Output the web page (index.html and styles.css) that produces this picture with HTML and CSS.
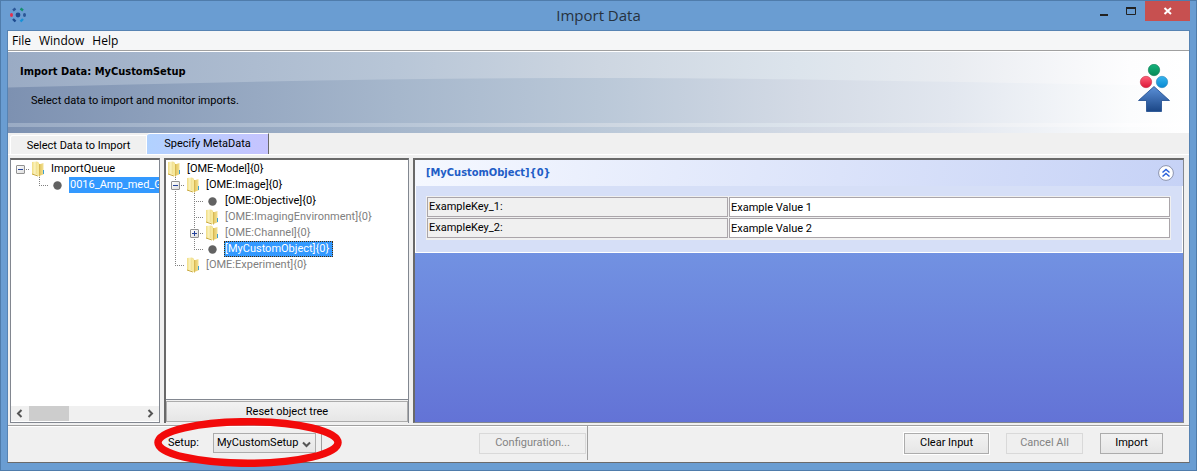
FILE: index.html
```
<!DOCTYPE html>
<html lang="en">
<head>
<meta charset="utf-8">
<title>Import Data</title>
<link rel="stylesheet" href="styles.css">
</head>
<body>
<svg class="defs" width="0" height="0" aria-hidden="true">
  <defs>
    <linearGradient id="fold"><stop offset="0" stop-color="#f0dc84"/><stop offset=".4" stop-color="#fbf3bd"/><stop offset="1" stop-color="#e3c75f"/></linearGradient>
    <linearGradient id="leaf"><stop offset="0" stop-color="#e0c25a"/><stop offset="1" stop-color="#f3e193"/></linearGradient>
    <symbol id="folder" viewBox="0 0 14 16">
      <path d="M1 1L6 0.500L8 2V14L1 13z" fill="url(#fold)"/>
      <path d="M1 13L7 15" stroke="#c9a93c" stroke-width="1"/>
      <path d="M8 3.500L12.500 2V13.500L8 15z" fill="url(#leaf)"/>
      <path d="M6 1L8.500 3V15.500L6 14z" fill="#f7e99c"/>
      <path d="M8.500 3V15.500" stroke="#d0b048" stroke-width=".8"/>
      <path d="M12 9h1v4h-1z" fill="#3d9fd0"/>
    </symbol>
    <symbol id="dot" viewBox="0 0 9 9"><circle cx="4.500" cy="4.500" r="4.200" fill="#626262"/></symbol>
  </defs>
</svg>
<div class="window">
  <header class="titlebar">
    <svg class="app-icon" viewBox="0 0 16 16" aria-hidden="true">
      <circle cx="8" cy="8" r="2.400" fill="#1d4a8f"/>
      <ellipse cx="1.500" cy="8" rx="1.500" ry="2" fill="#e5304d"/>
      <ellipse cx="14.500" cy="8" rx="1.500" ry="2" fill="#2b5797"/>
      <path d="M3 3.500L5.500 1.500" stroke="#2b5797" stroke-width="2.400"/>
      <path d="M10.500 1.500L13 3.500" stroke="#158f70" stroke-width="2.400"/>
      <path d="M3 12L5.500 14.500" stroke="#1d4a8f" stroke-width="2.400"/>
      <path d="M10.500 14.500L13 12" stroke="#1691d8" stroke-width="2.400"/>
    </svg>
    <h1 class="title">Import Data</h1>
    <div class="controls">
      <button class="control" aria-label="Minimize"><svg width="11" height="11" viewBox="0 0 11 11"><path d="M1 8h8v2H1z" fill="#222"/></svg></button>
      <button class="control" aria-label="Maximize"><svg width="11" height="11" viewBox="0 0 11 11"><path d="M.5 2v6.500h9V2" fill="none" stroke="#222"/><path d="M0 1h10v2H0z" fill="#222"/></svg></button>
      <button class="control close" aria-label="Close"><svg width="10" height="10" viewBox="0 0 10 10"><path d="M1.500 2l6.500 6M8 2L1.500 8" stroke="#fff" stroke-width="2"/></svg></button>
    </div>
  </header>
  <div class="client">
    <nav class="menubar">
      <button>File</button><button>Window</button><button>Help</button>
    </nav>
    <section class="banner">
      <svg class="banner-art" viewBox="0 0 1181 81" preserveAspectRatio="none" aria-hidden="true">
        <defs>
          <linearGradient id="top"><stop offset="0" stop-color="#9aabc4"/><stop offset=".33" stop-color="#b8c6d7"/><stop offset=".5" stop-color="#cdd6e1"/><stop offset=".67" stop-color="#dce4ec"/><stop offset=".8" stop-color="#e9ecf1"/><stop offset=".95" stop-color="#fdfdfe"/><stop offset="1" stop-color="#fff"/></linearGradient>
          <linearGradient id="low"><stop offset="0" stop-color="#7d91b1"/><stop offset=".33" stop-color="#a6b7cc"/><stop offset=".5" stop-color="#bac8d8"/><stop offset=".67" stop-color="#d3dae5"/><stop offset=".8" stop-color="#e2e7ef"/><stop offset=".95" stop-color="#fbfcfd"/><stop offset="1" stop-color="#fff"/></linearGradient>
        </defs>
        <rect width="1181" height="81" fill="url(#top)"/>
        <path d="M0 35.500C200 30 400 26 600 26C750 26 900 29 1181 34V71H0zM0 75H1181V81H0z" fill="url(#low)"/>
      </svg>
      <div class="banner-text">
        <h2>Import Data: MyCustomSetup</h2>
        <p>Select data to import and monitor imports.</p>
      </div>
      <svg class="banner-logo" width="32" height="49" viewBox="0 0 32 49" aria-hidden="true">
        <defs>
          <linearGradient id="g" x2="0" y2="1"><stop stop-color="#14b27c"/><stop offset="1" stop-color="#078a58"/></linearGradient>
          <linearGradient id="r" x2="0" y2="1"><stop stop-color="#ff6078"/><stop offset="1" stop-color="#dc1837"/></linearGradient>
          <linearGradient id="b" x2="0" y2="1"><stop stop-color="#35b4ee"/><stop offset="1" stop-color="#0889d2"/></linearGradient>
          <linearGradient id="a" x2="0" y2="1"><stop stop-color="#5b90d8"/><stop offset="1" stop-color="#1b4686"/></linearGradient>
        </defs>
        <circle cx="16" cy="6" r="5.700" fill="url(#g)" stroke="#067b51" stroke-width=".6"/>
        <circle cx="8" cy="18" r="5.700" fill="url(#r)" stroke="#c52b42" stroke-width=".6"/>
        <circle cx="24" cy="18" r="5.700" fill="url(#b)" stroke="#2783b8" stroke-width=".6"/>
        <path d="M16 22.500L31.500 36.500H23.500V47.500H8.500V36.500H.5z" fill="url(#a)" stroke="#1c4a8e" stroke-width=".8"/>
      </svg>
    </section>
    <div class="tabs" role="tablist">
      <button class="tab" role="tab">Select Data to Import</button>
      <button class="tab selected" role="tab" aria-selected="true">Specify MetaData</button>
    </div>
    <main class="panes">
      <section class="pane queue">
        <ul class="tree">
          <li class="row"><span class="guide"><button class="toggle" aria-label="Collapse"><svg width="7" height="7" viewBox="0 0 7 7"><path d="M1 3.500h5" stroke="#24429a"/></svg></button></span><svg class="folder"><use href="#folder"/></svg><span class="name">ImportQueue</span></li>
          <li class="row"><span class="guide blank"></span><span class="guide end"></span><svg class="dot"><use href="#dot"/></svg><span class="name chosen">0016_Amp_med_G</span></li>
        </ul>
        <div class="scrollbar">
          <svg width="7" height="9" viewBox="0 0 7 9"><path d="M5.500 1L2 4.500L5.500 8" fill="none" stroke="#555" stroke-width="2"/></svg>
          <span class="thumb"></span>
          <svg width="7" height="9" viewBox="0 0 7 9"><path d="M1.500 1L5 4.500L1.500 8" fill="none" stroke="#555" stroke-width="2"/></svg>
        </div>
      </section>
      <section class="pane objects">
        <ul class="tree">
          <li class="row"><svg class="folder"><use href="#folder"/></svg><span class="name">[OME-Model]{0}</span></li>
          <li class="row"><span class="guide through"><button class="toggle" aria-label="Collapse"><svg width="7" height="7" viewBox="0 0 7 7"><path d="M1 3.500h5" stroke="#24429a"/></svg></button></span><svg class="folder"><use href="#folder"/></svg><span class="name">[OME:Image]{0}</span></li>
          <li class="row"><span class="guide line"></span><span class="guide through"></span><svg class="dot"><use href="#dot"/></svg><span class="name">[OME:Objective]{0}</span></li>
          <li class="row"><span class="guide line"></span><span class="guide through"></span><svg class="folder"><use href="#folder"/></svg><span class="name muted">[OME:ImagingEnvironment]{0}</span></li>
          <li class="row"><span class="guide line"></span><span class="guide through"><button class="toggle" aria-label="Expand"><svg width="7" height="7" viewBox="0 0 7 7"><path d="M1 3.500h5M3.500 1v5" stroke="#24429a"/></svg></button></span><svg class="folder"><use href="#folder"/></svg><span class="name muted">[OME:Channel]{0}</span></li>
          <li class="row"><span class="guide line"></span><span class="guide end"></span><svg class="dot"><use href="#dot"/></svg><span class="name chosen focused">[MyCustomObject]{0}</span></li>
          <li class="row"><span class="guide end"></span><svg class="folder"><use href="#folder"/></svg><span class="name muted">[OME:Experiment]{0}</span></li>
        </ul>
        <button class="button reset">Reset object tree</button>
      </section>
      <section class="pane details">
        <header class="details-head">
          <h3>[MyCustomObject]{0}</h3>
          <button class="collapse" aria-label="Collapse section"><svg width="16" height="16" viewBox="0 0 16 16"><circle cx="8" cy="8" r="7.400" fill="#fff" stroke="#8b93ae"/><path d="M4.500 7.500L8 4.500L11.500 7.500M4.500 11.500L8 8.500L11.500 11.500" fill="none" stroke="#2b62d9" stroke-width="1.500"/></svg></button>
        </header>
        <div class="details-body">
          <table>
            <tr><th><label for="key1">ExampleKey_1:</label></th><td><input id="key1" type="text" value="Example Value 1"></td></tr>
            <tr><th><label for="key2">ExampleKey_2:</label></th><td><input id="key2" type="text" value="Example Value 2"></td></tr>
          </table>
        </div>
      </section>
    </main>
    <footer class="actions">
      <div class="setup">
        <label for="setup">Setup:</label>
        <span class="combo">
          <select id="setup"><option>MyCustomSetup</option></select>
          <svg class="chevron" width="9" height="7" viewBox="0 0 9 7"><path d="M1 1.500L4.500 5L8 1.500" fill="none" stroke="#555" stroke-width="2"/></svg>
        </span>
        <span class="rule"></span>
        <button class="button config" disabled>Configuration...</button>
        <svg class="highlight" viewBox="0 0 188 49" aria-hidden="true"><ellipse cx="94" cy="24.500" rx="90" ry="20.800" fill="none" stroke="#f20a0a" stroke-width="7.500"/></svg>
      </div>
      <div class="run">
        <button class="button clear">Clear Input</button>
        <button class="button cancel" disabled>Cancel All</button>
        <button class="button import">Import</button>
      </div>
    </footer>
  </div>
</div>
</body>
</html>
```
FILE: styles.css
```
* { box-sizing: border-box; }
body { margin: 0; font: 11px/16px Roboto, "Liberation Sans", sans-serif; color: #000; }
h1, h2, h3, p, ul { margin: 0; padding: 0; }
button, input, select { font: inherit; color: inherit; margin: 0; }
svg { flex: none; display: block; }
.defs { position: absolute; }

.window { display: flex; flex-direction: column; min-height: 100vh; padding: 0 6px 7px; background: #6a9dd2; border: 1px solid #4f7cab; }
.titlebar { display: grid; grid-template-columns: 1fr auto 1fr; height: 29px; }
.app-icon { width: 16px; height: 16px; margin: 6px 0 0 3px; }
.title { font: 15px/29px "Open Sans", "Noto Sans", sans-serif; color: #26323f; }
.controls { display: flex; justify-content: flex-end; align-items: flex-start; }
.control { display: grid; place-items: center; width: 27px; height: 20px; padding: 0; border: 0; background: none; }
.control.close { width: 45px; background: #c75050; }

.client { flex: 1; display: flex; flex-direction: column; background: #f0f0f0; border: 1px solid #5683b3; border-bottom-color: #6b6b6b; }
.menubar { display: flex; height: 20px; padding-left: 4px; background: #f5f6f7; border-bottom: 1px solid #a0a0a0; font: 12px/19px "Open Sans", "Noto Sans", sans-serif; }
.menubar button { border: 0; padding: 0; margin-right: 8px; background: none; }

.banner { display: flex; justify-content: space-between; position: relative; height: 82px; border-top: 1px solid #fff; }
.banner-art { position: absolute; inset: 0; width: 100%; height: 100%; }
.banner-text { position: relative; padding: 12px 0 0 12px; }
.banner h2 { font: bold 11px/16px "DejaVu Sans Condensed", "DejaVu Sans", sans-serif; }
.banner p { padding: 13px 0 0 11px; }
.banner-logo { position: relative; margin: 12px 19px 0 0; }

.tabs { display: flex; align-items: flex-end; height: 22px; padding-left: 2px; border-bottom: 1px solid #fff; }
.tab { width: 137px; height: 19px; padding: 2px 0 0; border: 1px solid #fff; border-bottom: 0; border-radius: 3px 0 0 0; background: #f0f0f0; }
.tab.selected { width: 122px; height: 21px; padding: 0 0 1px; border-width: 1px 1px 0 0; border-right-color: #696969; background: linear-gradient(100deg, #b1d2ff, #c6c3ff); }

.panes { flex: 1; display: flex; gap: 4px; padding: 3px 5px 2px 2px; }
.pane { display: flex; flex-direction: column; background: #fff; border: 1px solid #828790; border-top: 2px solid #696969; min-width: 0; }
.queue { width: 150px; }
.objects { width: 245px; background: #f0f0f0; border-left: 2px solid #696969; border-bottom: 0; }
.details { flex: 1; background: linear-gradient(#7292e2 90px, #6373d6); border-left-width: 2px; border-left-color: #696969; }

.tree { flex: 1; list-style: none; background: #fff; overflow: hidden; }
.queue .tree, .objects .tree { padding-top: 1px; }
.objects .tree { border-bottom: 1px solid #828790; }
.row { display: flex; height: 16px; white-space: nowrap; }
.guide { flex: none; display: grid; width: 19px; padding: 4px 0 0 5px; background: repeating-linear-gradient(90deg, #808080 0 1px, transparent 1px 2px) 9px 8px / 10px 1px no-repeat; }
.guide.line { background: repeating-linear-gradient(#808080 0 1px, transparent 1px 2px) 9px 0 / 1px 16px no-repeat; }
.guide.through { background: repeating-linear-gradient(90deg, #808080 0 1px, transparent 1px 2px) 9px 8px / 10px 1px no-repeat, repeating-linear-gradient(#808080 0 1px, transparent 1px 2px) 9px 0 / 1px 16px no-repeat; }
.guide.end { background: repeating-linear-gradient(90deg, #808080 0 1px, transparent 1px 2px) 9px 8px / 10px 1px no-repeat, repeating-linear-gradient(#808080 0 1px, transparent 1px 2px) 9px 0 / 1px 9px no-repeat; }
.guide.blank { background: none; }
.toggle { width: 9px; height: 9px; padding: 0; border: 1px solid #919191; border-radius: 1px; background: linear-gradient(135deg, #fff, #ddd); }
.folder { width: 14px; height: 16px; margin: 0 5px 0 1px; }
.dot { width: 9px; height: 9px; margin: 4px 7px 0 4px; }
.name { padding: 0 1px; line-height: 16px; }
.muted { color: #808080; }
.chosen { background: #3399ff; color: #fff; }
.focused { outline: 1px dotted #4d2a00; outline-offset: -1px; padding-right: 4px; }

.scrollbar { display: flex; align-items: center; height: 15px; margin-bottom: 1px; padding: 0 5px; background: #f0f0f0; }
.thumb { width: 40px; height: 15px; margin: 0 auto 0 6px; background: #cdcdcd; }

.button { height: 21px; padding: 0; border: 1px solid #acacac; background: linear-gradient(#f2f2f2, #e6e6e6); }
.button:disabled { border-color: #d9d9d9; background: #efefef; color: #838383; }
.reset { margin: 1px 0; }

.details-head { display: flex; align-items: center; justify-content: space-between; height: 26px; padding: 0 9px 0 11px; background: linear-gradient(100deg, #f5f8ff, #c6d2f6); }
.details-head h3 { font: bold 11px/16px "DejaVu Sans Condensed", "DejaVu Sans", sans-serif; color: #215dc6; }
.collapse { padding: 0; border: 0; background: none; }
.details-body { padding: 10px 11px 12px 10px; background: #d6dff7; border: solid #fff; border-width: 0 1px 1px; }
table { width: 100%; table-layout: fixed; border-spacing: 1px; background: #f0f0f0; padding-bottom: 1px; }
th, td { height: 20px; padding: 0 1px; border: 1px solid #aaa5aa; font-weight: normal; text-align: left; }
th { width: 301px; }
td { background: #fff; }
input { display: block; width: 100%; height: 18px; padding: 0; border: 0; background: none; outline: 0; }

.actions { display: flex; height: 37px; padding-bottom: 2px; border-top: 1px solid #a0a0a0; box-shadow: inset 0 1px #fff; }
.setup { position: relative; display: flex; align-items: center; width: 580px; padding-left: 160px; border-right: 1px solid #a0a0a0; }
.setup label { width: 45px; }
.combo { position: relative; }
select { appearance: none; display: block; width: 103px; height: 20px; padding: 0 0 0 3px; border: 1px solid #acacac; border-radius: 0; background: linear-gradient(#f0f0f0, #e6e6e6); }
.chevron { position: absolute; right: 5px; top: 8px; }
.rule { width: 1px; height: 26px; margin-left: 5px; background: #a0a0a0; }
.config { width: 107px; margin-left: auto; margin-right: 1px; }
.highlight { position: absolute; left: 146px; top: -8px; width: 188px; height: 49px; }
.run { flex: 1; display: flex; align-items: center; justify-content: flex-end; padding-right: 26px; }
.clear { width: 85px; margin-right: 17px; outline: 1px solid #fff; }
.cancel { width: 77px; margin-right: 17px; }
.import { width: 63px; }
```
